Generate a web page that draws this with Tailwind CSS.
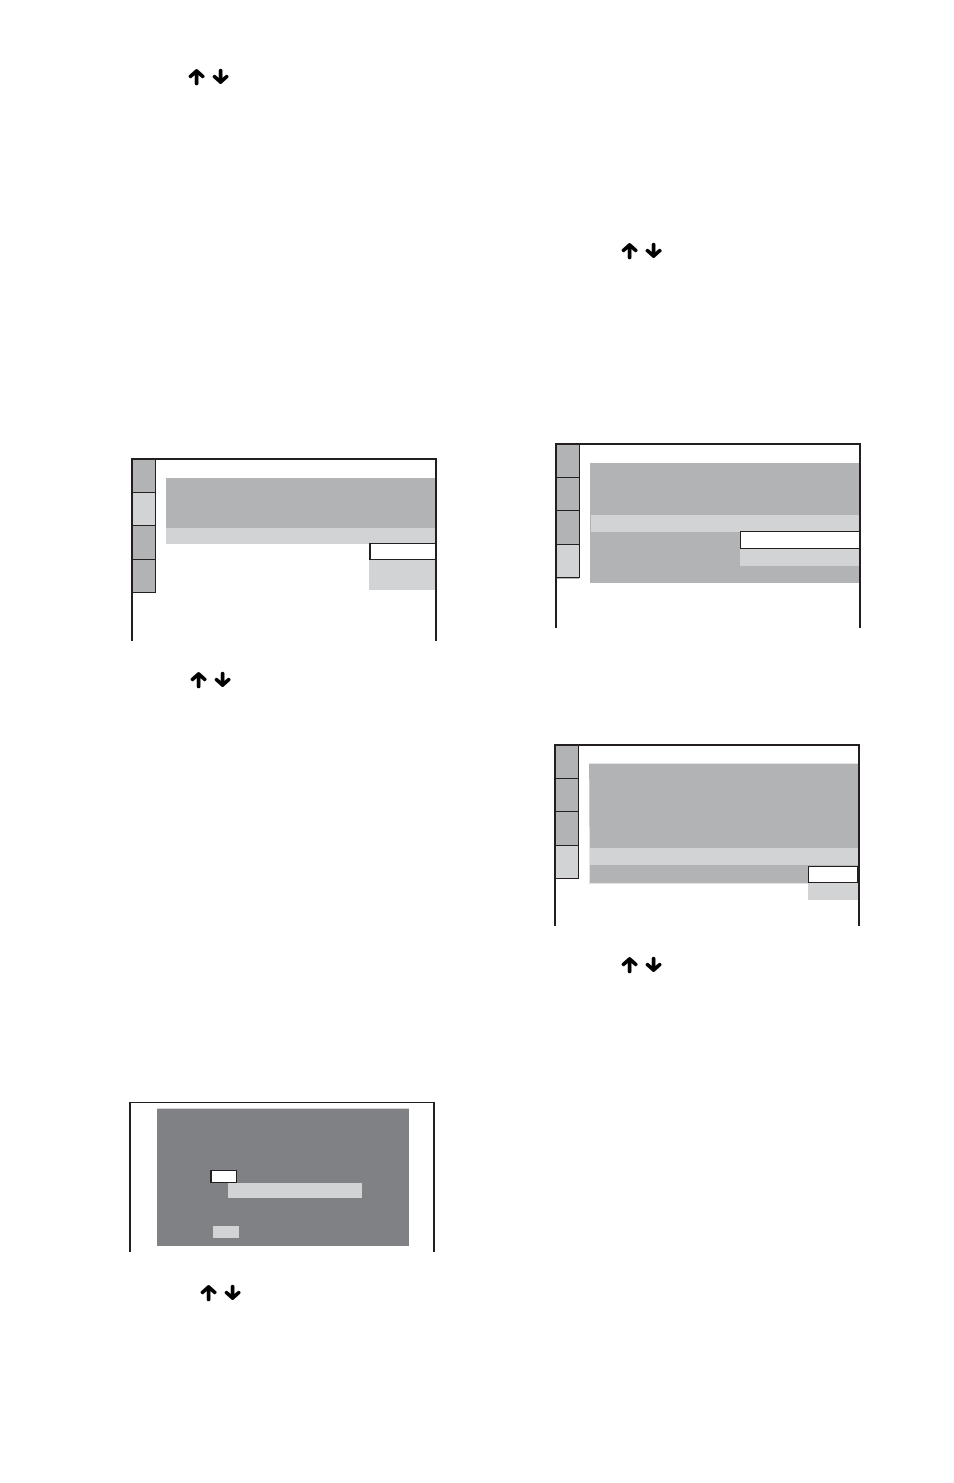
<!DOCTYPE html>
<html lang="en">

<head>
    <meta charset="UTF-8">
    <meta name="viewport" content="width=device-width, initial-scale=1.0">
    <title>Setup Screens</title>
    <script src="https://cdn.jsdelivr.net/npm/@tailwindcss/browser@4"></script>
</head>

<body class="bg-white font-['Liberation_Sans',sans-serif]">
    <!-- shared up/down arrow pair -->
    <svg class="hidden" xmlns="http://www.w3.org/2000/svg">
        <symbol id="arrows" viewBox="0 0 42 18">
            <g fill="none" stroke="#000" stroke-width="3.7" stroke-linecap="round" stroke-linejoin="round">
                <path d="M8.6 15.4V3.2M2.5 8.3L8.6 3L14.7 8.3" />
                <path d="M32.6 2.6V13.8M26.5 8.7L32.6 14L38.7 8.7" />
            </g>
        </symbol>
    </svg>

    <main class="grid grid-cols-2 min-h-screen">
        <section class="flex flex-col">
            <svg class="w-[42px] h-[18px] mt-[68px] ml-[188px]" role="img" aria-label="Up and down"><use href="#arrows" /></svg>

            <!-- menu screen, second tab open -->
            <figure class="flex h-[183px] mt-[372px] ml-[131px] mr-10 border-2 border-b-0 border-[#231f20]">
                <div class="w-[23px] shrink-0">
                    <div class="h-[33px] border-r border-b border-[#231f20] bg-[#b1b3b5]"></div>
                    <div class="h-[33px] border-r border-b border-[#231f20] bg-[#d1d3d4]"></div>
                    <div class="h-[34px] border-r border-b border-[#231f20] bg-[#b1b3b5]"></div>
                    <div class="h-[33px] border-r border-b border-[#231f20] bg-[#b1b3b5]"></div>
                </div>
                <div class="grow ml-2.5 pt-[18px]">
                    <div class="h-[50px] bg-[#b1b3b5]"></div>
                    <div class="relative h-4 bg-[#d1d3d4]">
                        <div class="absolute top-full right-0 w-[66px] -mt-px">
                            <div class="h-[17px] border border-l-2 border-r-0 border-[#231f20] bg-white"></div>
                            <div class="h-[30px] bg-[#d1d3d4]"></div>
                        </div>
                    </div>
                </div>
            </figure>

            <svg class="w-[42px] h-[18px] mt-[30px] ml-[190px]" role="img" aria-label="Up and down"><use href="#arrows" /></svg>

            <!-- dialog screen -->
            <figure class="h-[150px] mt-[413px] ml-[129px] mr-[42px] pt-[5px] pl-[26px] pr-6 border-2 border-t border-b-0 border-[#231f20]">
                <div class="flex flex-col items-start h-[138px] pl-[53px] pt-[61px] border-t border-[#d1d3d4] bg-[#808184]">
                    <div class="w-[27px] h-[13px] border border-l-2 border-[#231f20] bg-white"></div>
                    <div class="w-[134px] h-[15px] ml-[18px] bg-[#d1d3d4]"></div>
                    <div class="w-[26px] h-3 mt-7 ml-[3px] bg-[#d1d3d4]"></div>
                </div>
            </figure>

            <svg class="w-[42px] h-[18px] mt-8 ml-[200px]" role="img" aria-label="Up and down"><use href="#arrows" /></svg>
        </section>

        <section class="flex flex-col">
            <svg class="w-[42px] h-[18px] mt-[242px] ml-36" role="img" aria-label="Up and down"><use href="#arrows" /></svg>

            <!-- menu screen, fourth tab open, wide options -->
            <figure class="flex h-[185px] mt-[183px] ml-[78px] mr-[93px] border-2 border-b-0 border-[#231f20]">
                <div class="w-[23px] shrink-0">
                    <div class="h-[33px] border-r border-b border-[#231f20] bg-[#b1b3b5]"></div>
                    <div class="h-[33px] border-r border-b border-[#231f20] bg-[#b1b3b5]"></div>
                    <div class="h-[34px] border-r border-b border-[#231f20] bg-[#b1b3b5]"></div>
                    <div class="h-[33px] border-r border-b border-[#231f20] bg-[#d1d3d4]"></div>
                    <div class="h-px mr-px bg-[#b1b3b5]"></div>
                </div>
                <div class="grow ml-2.5 pt-[18px]">
                    <div class="h-[52px] bg-[#b1b3b5]"></div>
                    <div class="relative h-[17px] border-l border-[#b1b3b5] bg-[#d1d3d4]">
                        <div class="absolute top-full right-0 w-[119px] -mt-px">
                            <div class="h-[18px] border border-r-0 border-[#231f20] bg-white"></div>
                            <div class="h-[17px] bg-[#d1d3d4]"></div>
                        </div>
                    </div>
                    <div class="h-[51px] bg-[#b1b3b5]"></div>
                </div>
            </figure>

            <!-- menu screen, fourth tab open, last row picked -->
            <figure class="flex h-[182px] mt-[116px] ml-[77px] mr-[94px] border-2 border-b-0 border-[#231f20]">
                <div class="w-[23px] shrink-0">
                    <div class="h-[33px] border-r border-b border-[#231f20] bg-[#b1b3b5]"></div>
                    <div class="h-[33px] border-r border-b border-[#231f20] bg-[#b1b3b5]"></div>
                    <div class="h-[34px] border-r border-b border-[#231f20] bg-[#b1b3b5]"></div>
                    <div class="h-[33px] border-r border-b border-[#231f20] bg-[#d1d3d4]"></div>
                </div>
                <div class="grow ml-2.5 pt-[17px]">
                    <div class="h-4 border-t border-[#e2e3e4] bg-[#b1b3b5]"></div>
                    <div class="h-12 border-l border-[#c8cacb] bg-[#b1b3b5]"></div>
                    <div class="h-[21px] border-l border-[#e2e3e4] bg-[#b1b3b5]"></div>
                    <div class="relative h-[17px] border-l border-[#e2e3e4] bg-[#d1d3d4]">
                        <div class="absolute top-full right-0 w-[50px] mt-px">
                            <div class="h-[17px] border border-[#231f20] bg-white"></div>
                            <div class="h-[17px] bg-[#d1d3d4]"></div>
                        </div>
                    </div>
                    <div class="h-[19px] border-l border-b border-[#e2e3e4] bg-[#b1b3b5]"></div>
                </div>
            </figure>

            <svg class="w-[42px] h-[18px] mt-[30px] ml-36" role="img" aria-label="Up and down"><use href="#arrows" /></svg>
        </section>
    </main>
</body>

</html>
